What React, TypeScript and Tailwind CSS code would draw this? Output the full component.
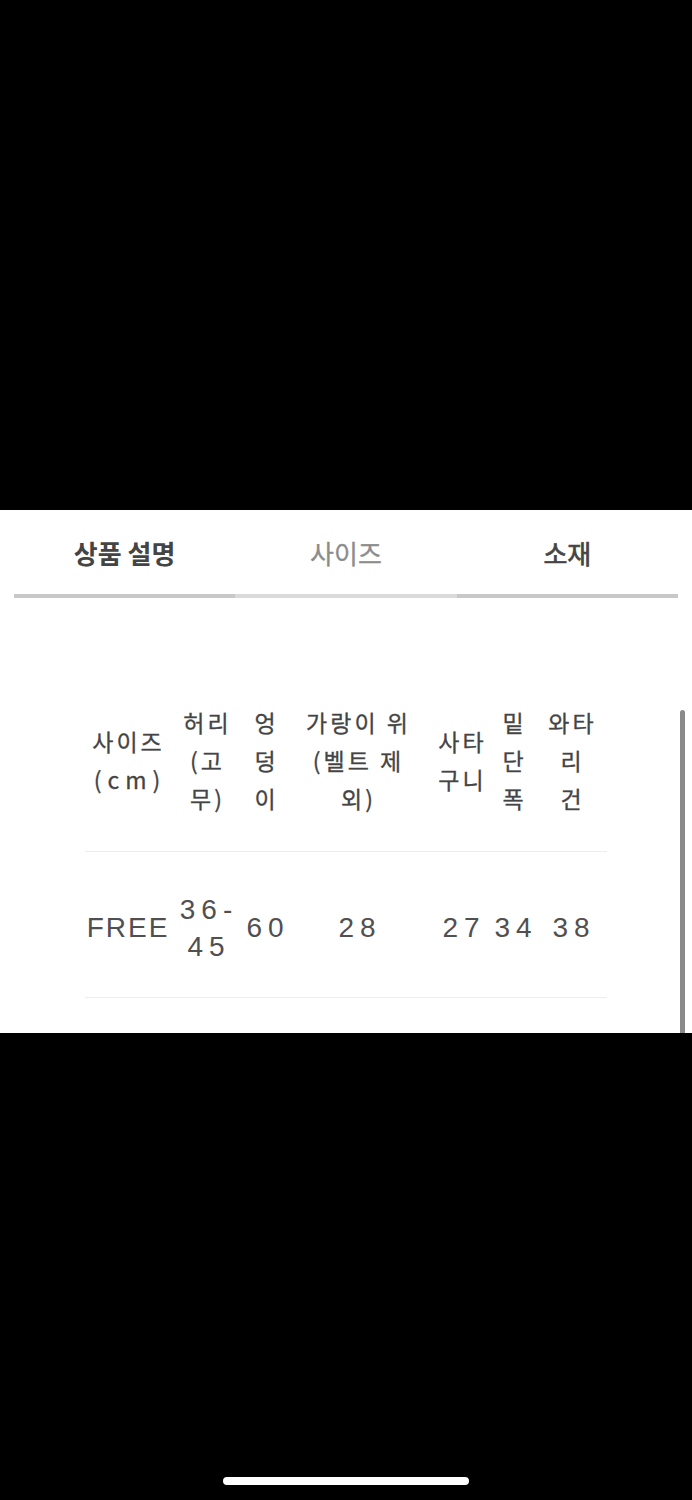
import React from 'react';

const kr = { fontFamily: '"Noto Sans CJK KR", "Noto Sans", sans-serif' };
const latin = { fontFamily: '"Liberation Sans", Arial, sans-serif' };

// column boxes: margin-left and width, measured from the table's left edge
const cols = [
  'ml-0 w-[84px]',
  'ml-[7px] w-[60px]',
  'ml-[9px] w-[40px]',
  'ml-[10px] w-[124px]',
  'ml-[14px] w-[56px]',
  'ml-[4px] w-[40px]',
  'ml-[8px] w-[60px]',
];

const headers: string[][] = [
  ['사이즈', '(cm)'],
  ['허리', '(고', '무)'],
  ['엉', '덩', '이'],
  ['가랑이 위', '(벨트 제', '외)'],
  ['사타', '구니'],
  ['밑', '단', '폭'],
  ['와타', '리', '건'],
];

const row: { lines: string[]; track: string }[] = [
  { lines: ['FREE'], track: 'tracking-[2px] pl-[2px]' },
  { lines: ['36-', '45'], track: 'tracking-[6px] pl-[6px]' },
  { lines: ['60'], track: 'tracking-[6px] pl-[6px]' },
  { lines: ['28'], track: 'tracking-[6px] pl-[6px]' },
  { lines: ['27'], track: 'tracking-[6px] pl-[6px]' },
  { lines: ['34'], track: 'tracking-[6px] pl-[6px]' },
  { lines: ['38'], track: 'tracking-[6px] pl-[6px]' },
];

function Tab({ label, textClass, barClass }: { label: string; textClass: string; barClass: string }) {
  return (
    <div className="flex-1 flex flex-col">
      <div className="h-[84px] pt-[24px]">
        <div className={`text-center text-[26px] leading-[38px] ${textClass}`} style={kr}>
          {label}
        </div>
      </div>
      <div className={`h-[4px] ${barClass}`} />
    </div>
  );
}

export default function App() {
  return (
    <div className="w-[692px] h-[1500px] bg-black flex flex-col overflow-hidden">
      <div className="h-[510px] shrink-0" />

      {/* white sheet */}
      <div className="relative h-[523px] shrink-0 bg-white">
        <div className="flex px-[14px]">
          <Tab label="상품 설명" textClass="font-bold text-[#444]" barClass="bg-[#c8c8c8]" />
          <Tab label="사이즈" textClass="font-normal text-[#8c8c8c] [-webkit-text-stroke:0.3px_#8c8c8c]" barClass="bg-[#dadada]" />
          <Tab label="소재" textClass="font-normal text-[#444] [-webkit-text-stroke:0.7px_#444]" barClass="bg-[#c8c8c8]" />
        </div>

        <div className="ml-[85px] mt-[105px] w-[522px]">
          {/* header */}
          <div className="flex items-center h-[149px] pb-[35px] border-b border-[#ededed] text-[#444] [-webkit-text-stroke:0.3px_#444]" style={kr}>
            {headers.map((lines, i) => (
              <div key={i} className={`${cols[i]} shrink-0 flex flex-col items-center`}>
                <div className="whitespace-nowrap text-center text-[23px] leading-[38px] tracking-[3px] pl-[3px]">
                  {lines.map((l, j) => (
                    <div key={j} className={l === '(cm)' ? 'tracking-[6px] pl-[3px]' : ''}>
                      {l}
                    </div>
                  ))}
                </div>
              </div>
            ))}
          </div>

          {/* data row */}
          <div className="flex items-center h-[146px] pt-[6px] border-b border-[#ededed] text-[#505050]" style={latin}>
            {row.map((r, i) => (
              <div key={i} className={`${cols[i]} shrink-0 flex flex-col items-center`}>
                <div className={`whitespace-nowrap text-center text-[28px] leading-[37px] ${r.track}`}>
                  {r.lines.map((l, j) => (
                    <div key={j}>{l}</div>
                  ))}
                </div>
              </div>
            ))}
          </div>
        </div>

        {/* scrollbar */}
        <div className="absolute left-[680px] top-[200px] w-[5px] h-[323px] rounded-t-full bg-[#8a8a8a]" />
      </div>

      {/* home indicator */}
      <div className="flex justify-center pt-[444px]">
        <div className="w-[246px] h-[8px] rounded-full bg-white" />
      </div>
    </div>
  );
}
